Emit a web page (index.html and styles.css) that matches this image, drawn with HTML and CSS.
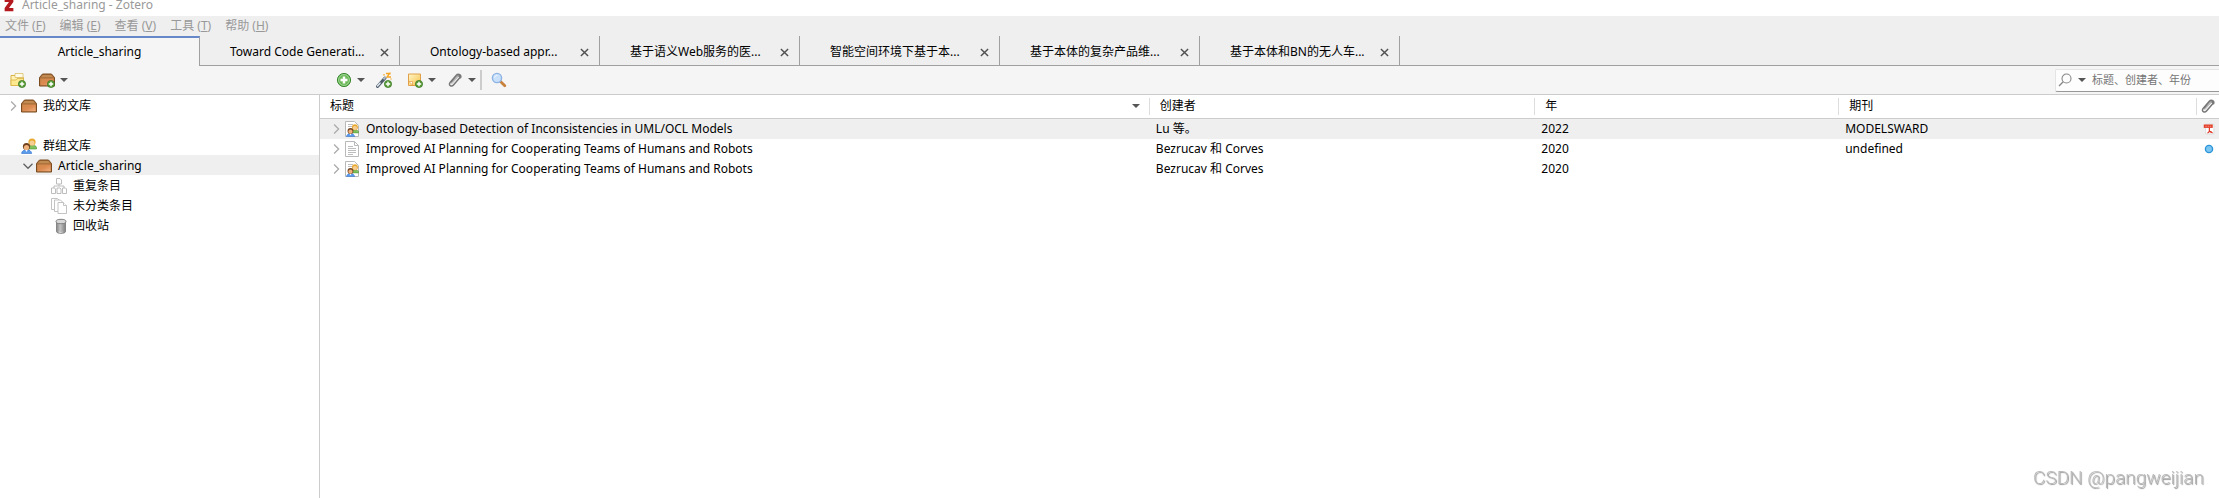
FILE: index.html
```html
<!DOCTYPE html>
<html lang="zh">

<head>
    <meta charset="UTF-8">
    <meta name="viewport" content="width=device-width, initial-scale=1.0">
    <title>Article_sharing - Zotero</title>
    <link rel="stylesheet" href="styles.css">
</head>

<body>

    <!-- 图标 -->
    <svg class="sprite" aria-hidden="true">
        <defs>
            <linearGradient id="boxFront" x1="0" y1="0" x2="1" y2="1">
                <stop offset="0" stop-color="#d08a4c" />
                <stop offset="0.5" stop-color="#dc8a50" />
                <stop offset="1" stop-color="#f0b080" />
            </linearGradient>
            <linearGradient id="noteFill" x1="0" y1="0" x2="1" y2="1">
                <stop offset="0" stop-color="#fff6c8" />
                <stop offset="1" stop-color="#f7c24a" />
            </linearGradient>
            <linearGradient id="binFill" x1="0" y1="0" x2="1" y2="0">
                <stop offset="0" stop-color="#777" />
                <stop offset="0.4" stop-color="#eee" />
                <stop offset="1" stop-color="#777" />
            </linearGradient>
            <radialGradient id="greenFill">
                <stop offset="0" stop-color="#8fd07a" />
                <stop offset="1" stop-color="#55a945" />
            </radialGradient>
        </defs>
        <symbol id="plus-badge" viewBox="0 0 8 8">
            <circle cx="4" cy="4" r="3.6" fill="#5a9e3a" stroke="#35751f" stroke-width="0.7" />
            <path d="M4 1.8v4.4M1.8 4h4.4" stroke="#fff" stroke-width="1.4" />
        </symbol>
        <symbol id="box" viewBox="0 0 16 16">
            <path d="M3.500 2h9l3 3.500v8.500H.5V5.500z" fill="#a86c38" stroke="#7b4c20" stroke-linejoin="round" />
            <path d="M3.800 3h8.400l1.800 2.300H2z" fill="#c08a50" />
            <path d="M1.300 6.500h13.400v6.700H1.300z" fill="url(#boxFront)" />
        </symbol>
        <symbol id="new-folder" viewBox="0 0 16 16">
            <path d="M1 3.500h5l1.500 2h6v8H1z" fill="#fff3b8" stroke="#d9b345" />
            <path d="M5 1.500h8v4H5z" fill="#fffbe6" stroke="#dcc069" stroke-width="0.8" />
            <path d="M1 8h5l1-1.500h6.500v7H1z" fill="#fce88f" stroke="#d9b345" stroke-width="0.8" />
            <use href="#plus-badge" x="8" y="8" width="8" height="8" />
        </symbol>
        <symbol id="new-library" viewBox="0 0 16 16">
            <use href="#box" width="16" height="16" />
            <use href="#plus-badge" x="8" y="8" width="8" height="8" />
        </symbol>
        <symbol id="add" viewBox="0 0 16 16">
            <circle cx="8" cy="8" r="6.600" fill="url(#greenFill)" stroke="#3f8c35" />
            <circle cx="8" cy="8" r="5.400" fill="none" stroke="#b9e3ad" stroke-width="0.8" />
            <path d="M8 4.500v7M4.500 8h7" stroke="#fff" stroke-width="2.400" />
        </symbol>
        <symbol id="wand" viewBox="0 0 16 16">
            <path d="M1.500 14.500L9 6" stroke="#4d5a68" stroke-width="3" stroke-linecap="round" />
            <path d="M1.500 14L4 11.200" stroke="#dbe4ee" stroke-width="1.600" stroke-linecap="round" />
            <path d="M7.500 7.300L9.500 5" stroke="#a9b6c4" stroke-width="2" />
            <path d="M10 1.500h3.500L11 5h4M14 .5v2M8 2v1.500M15 6.500v1" fill="none" stroke="#f5a623" stroke-width="1.300" />
            <use href="#plus-badge" x="8" y="8" width="8" height="8" />
        </symbol>
        <symbol id="new-note" viewBox="0 0 16 16">
            <path d="M1.500 2h12v11.500h-12z" fill="url(#noteFill)" stroke="#e0a04a" />
            <path d="M2 9.500l3.500 0v3.500z" fill="#fff" stroke="#e0912e" stroke-width="0.6" />
            <use href="#plus-badge" x="8" y="8" width="8" height="8" />
        </symbol>
        <symbol id="clip" viewBox="0 0 16 16">
            <path d="M5 10.500l5.500-6c1.500-1.500 3.300 0 2 1.600L6.500 13c-2 2.200-5.500.3-3.400-2.500l6-7c2.200-2.500 6-.5 4.400 2.300" fill="none" stroke="#777" stroke-width="1.500" stroke-linecap="round" />
            <path d="M4.300 11.800l6.500-7.300" stroke="#c8c8c8" stroke-width="1.200" />
        </symbol>
        <symbol id="find" viewBox="0 0 16 16">
            <path d="M9.500 9.500l4.300 4.300" stroke="#c8813c" stroke-width="2.800" stroke-linecap="round" />
            <circle cx="6" cy="6" r="4.600" fill="#c9e0fa" stroke="#8db2e3" stroke-width="1.400" />
            <path d="M3.600 5.500c.4-1.400 1.400-2 2.600-2" fill="none" stroke="#fff" />
        </symbol>
        <symbol id="lens" viewBox="0 0 16 16">
            <circle cx="9.500" cy="6.500" r="4.500" fill="none" stroke="#888" stroke-width="1.100" />
            <path d="M6.200 9.800L2 14" stroke="#888" stroke-width="1.300" />
        </symbol>
        <symbol id="group" viewBox="0 0 16 16">
            <path d="M6 9.500c0-3 9.500-3 9.500 0v1.500H6z" fill="#7fc25c" stroke="#4d9136" stroke-width="0.6" />
            <circle cx="11" cy="4" r="3.600" fill="#e9a92f" />
            <circle cx="11" cy="5" r="2.500" fill="#f7cf95" />
            <path d="M.6 15.500c0-5 10-5 10 0z" fill="#5b9bee" stroke="#2f6fc7" stroke-width="0.6" />
            <path d="M4.300 12h2.400l-1.200 2z" fill="#fff" />
            <circle cx="5.500" cy="8.500" r="3.600" fill="#70401d" />
            <circle cx="5.500" cy="9.500" r="2.600" fill="#f0b27c" />
        </symbol>
        <symbol id="duplicates" viewBox="0 0 16 16">
            <g fill="#fff" stroke="#b5b5b5" stroke-width="0.9">
                <path d="M8 6v2M3 10V8h10v2" fill="none" />
                <path d="M5.500.5h3.500l1.500 1.500v4h-5zM.5 10h3l1 1v4.500h-4zM6 10h3l1 1v4.500H6zM11.500 10h3l1 1v4.500h-4z" />
            </g>
        </symbol>
        <symbol id="unfiled" viewBox="0 0 16 16">
            <g fill="#fff" stroke="#bcbcbc" stroke-width="0.9">
                <path d="M.5.5h6l2 2v9h-8z" />
                <path d="M3.500 2h6l2 2v9.500h-8z" />
                <path d="M7 4.500h5.500l3 3v8H7z" />
                <path d="M12.500 4.500v3h3" />
            </g>
        </symbol>
        <symbol id="bin" viewBox="0 0 16 16">
            <path d="M5.500 3.500h9v10c0 2.500-9 2.500-9 0z" fill="url(#binFill)" stroke="#777" stroke-width="0.8" />
            <path d="M8 6v7.500M10 6v8M12 6v7.500" stroke="#888" stroke-width="0.8" />
            <ellipse cx="10" cy="3.500" rx="5" ry="2.200" fill="#d8d8d8" stroke="#777" stroke-width="0.9" />
        </symbol>
        <symbol id="page" viewBox="0 0 16 16">
            <path d="M1.500.5h9l4 4v11h-13z" fill="#fff" stroke="#b9b9b9" />
            <path d="M10.500.5v4h4" fill="none" stroke="#b9b9b9" />
            <path d="M4 5.500h5M4 7.500h8M4 9.500h8M4 11.500h8M4 13.500h5" stroke="#b5b5b5" stroke-width="0.9" />
        </symbol>
        <symbol id="group-page" viewBox="0 0 16 16">
            <path d="M1.500.5h9l4 4v11h-13z" fill="#fff" stroke="#b9b9b9" />
            <path d="M4 3.500h5M4 5.500h5" stroke="#b5b5b5" stroke-width="0.9" />
            <use href="#group" x="2" y="3" width="13" height="13" />
        </symbol>
        <symbol id="pdf" viewBox="0 0 16 16">
            <path d="M3.500 1.500h11v13h-11z" fill="#fff" stroke="#d5d5d5" />
            <path d="M1 2h12v4.500H1z" fill="#e33b25" />
            <path d="M3 4.300h8" stroke="#f7b0a5" stroke-dasharray="2 1" />
            <path d="M8.500 6v4.500c1 1.500 2 2.500 4.500 2.500M9 10c-.5 1.500-1.500 2.500-3 3.500M7.500 11.500h4" fill="none" stroke="#e03a28" stroke-width="1.600" />
        </symbol>
        <symbol id="dot" viewBox="0 0 16 16">
            <circle cx="8" cy="8" r="4.800" fill="#7cc6f2" stroke="#2b94d8" stroke-width="1.800" />
        </symbol>
        <symbol id="twisty" viewBox="0 0 16 16">
            <path d="M5.500 2l6 6-6 6" fill="none" stroke="#aaa" stroke-width="1.700" />
        </symbol>
        <symbol id="twisty-open" viewBox="0 0 16 16">
            <path d="M2 5l6 6 6-6" fill="none" stroke="#606060" stroke-width="1.700" />
        </symbol>
        <symbol id="close" viewBox="0 0 10 10">
            <path d="M1 1l8 8M9 1L1 9" stroke="#505050" stroke-width="1.600" />
        </symbol>
        <symbol id="zotero" viewBox="0 0 12 16">
            <path d="M1 1h10v3.500L6 11.500h5V15H1v-3.500L6 4.500H1z" fill="#b3191e" />
        </symbol>
    </svg>

    <header class="title-bar">
        <svg class="logo"><use href="#zotero" /></svg>
        <span>Article_sharing - Zotero</span>
    </header>

    <nav class="menu-bar">
        <button>文件 (<u>F</u>)</button>
        <button>编辑 (<u>E</u>)</button>
        <button>查看 (<u>V</u>)</button>
        <button>工具 (<u>T</u>)</button>
        <button>帮助 (<u>H</u>)</button>
    </nav>

    <div class="tab-bar">
        <div class="tab selected"><button class="tab-name">Article_sharing</button></div>
        <div class="tab">
            <button class="tab-name">Toward Code Generati...</button>
            <button class="tab-close" aria-label="关闭"><svg><use href="#close" /></svg></button>
        </div>
        <div class="tab">
            <button class="tab-name">Ontology-based appr...</button>
            <button class="tab-close" aria-label="关闭"><svg><use href="#close" /></svg></button>
        </div>
        <div class="tab">
            <button class="tab-name">基于语义Web服务的医...</button>
            <button class="tab-close" aria-label="关闭"><svg><use href="#close" /></svg></button>
        </div>
        <div class="tab">
            <button class="tab-name">智能空间环境下基于本...</button>
            <button class="tab-close" aria-label="关闭"><svg><use href="#close" /></svg></button>
        </div>
        <div class="tab">
            <button class="tab-name">基于本体的复杂产品维...</button>
            <button class="tab-close" aria-label="关闭"><svg><use href="#close" /></svg></button>
        </div>
        <div class="tab">
            <button class="tab-name">基于本体和BN的无人车...</button>
            <button class="tab-close" aria-label="关闭"><svg><use href="#close" /></svg></button>
        </div>
    </div>

    <div class="toolbar">
        <div class="collection-tools">
            <button aria-label="新建分类"><svg class="icon"><use href="#new-folder" /></svg></button>
            <button class="has-menu" aria-label="新建文库"><svg class="icon"><use href="#new-library" /></svg></button>
        </div>
        <div class="item-tools">
            <button class="has-menu" aria-label="新建条目"><svg class="icon"><use href="#add" /></svg></button>
            <button class="wand" aria-label="通过标识符添加条目"><svg class="icon"><use href="#wand" /></svg></button>
            <button class="has-menu" aria-label="新建笔记"><svg class="icon"><use href="#new-note" /></svg></button>
            <button class="has-menu" aria-label="添加附件"><svg class="icon"><use href="#clip" /></svg></button>
            <span class="separator"></span>
            <button aria-label="高级搜索"><svg class="icon"><use href="#find" /></svg></button>
        </div>
        <div class="search-box">
            <button class="has-menu" aria-label="搜索范围"><svg class="icon"><use href="#lens" /></svg></button>
            <input type="text" placeholder="标题、创建者、年份" aria-label="搜索">
        </div>
    </div>

    <main class="panes">
        <!-- 分类列表 -->
        <ul class="collections">
            <li><svg class="twisty"><use href="#twisty" /></svg><svg class="icon"><use href="#box" /></svg>我的文库</li>
            <li></li>
            <li><span class="twisty"></span><svg class="icon"><use href="#group" /></svg>群组文库</li>
            <li class="level-1 current"><svg class="twisty"><use href="#twisty-open" /></svg><svg class="icon"><use href="#box" /></svg>Article_sharing</li>
            <li class="level-2"><span class="twisty"></span><svg class="icon"><use href="#duplicates" /></svg>重复条目</li>
            <li class="level-2"><span class="twisty"></span><svg class="icon"><use href="#unfiled" /></svg>未分类条目</li>
            <li class="level-2"><span class="twisty"></span><svg class="icon"><use href="#bin" /></svg>回收站</li>
        </ul>

        <!-- 条目列表 -->
        <div class="items">
            <table>
                <colgroup>
                    <col class="col-title">
                    <col class="col-creator">
                    <col class="col-year">
                    <col>
                    <col class="col-attachment">
                </colgroup>
                <thead>
                    <tr>
                        <th><div class="head sorted">标题</div></th>
                        <th><div class="head">创建者</div></th>
                        <th><div class="head">年</div></th>
                        <th><div class="head">期刊</div></th>
                        <th><div class="head head-icon"><svg class="icon" role="img" aria-label="附件"><use href="#clip" /></svg></div></th>
                    </tr>
                </thead>
                <tbody>
                    <tr class="current">
                        <td><div class="item-title"><svg class="twisty"><use href="#twisty" /></svg><svg class="icon"><use href="#group-page" /></svg>Ontology-based Detection of Inconsistencies in UML/OCL Models</div></td>
                        <td>Lu 等。</td>
                        <td>2022</td>
                        <td>MODELSWARD</td>
                        <td><svg class="small-icon"><use href="#pdf" /></svg></td>
                    </tr>
                    <tr>
                        <td><div class="item-title"><svg class="twisty"><use href="#twisty" /></svg><svg class="icon"><use href="#page" /></svg>Improved AI Planning for Cooperating Teams of Humans and Robots</div></td>
                        <td>Bezrucav 和 Corves</td>
                        <td>2020</td>
                        <td>undefined</td>
                        <td><svg class="small-icon"><use href="#dot" /></svg></td>
                    </tr>
                    <tr>
                        <td><div class="item-title"><svg class="twisty"><use href="#twisty" /></svg><svg class="icon"><use href="#group-page" /></svg>Improved AI Planning for Cooperating Teams of Humans and Robots</div></td>
                        <td>Bezrucav 和 Corves</td>
                        <td>2020</td>
                        <td></td>
                        <td></td>
                    </tr>
                </tbody>
            </table>
        </div>
    </main>

    <div class="watermark">CSDN @pangweijian</div>

</body>

</html>
```

FILE: styles.css
```css
* {
    box-sizing: border-box;
}

body {
    margin: 0;
    min-height: 100vh;
    display: flex;
    flex-direction: column;
    font-family: "Noto Sans", "Noto Sans CJK SC", sans-serif;
    font-size: 12px;
    line-height: 20px;
    color: #000;
    background-color: #fff;
}

button {
    padding: 0;
    border: none;
    background: none;
    font: inherit;
    color: inherit;
    white-space: nowrap;
}

svg {
    display: block;
    flex: none;
}

.sprite {
    position: absolute;
    width: 0;
    height: 0;
}

.icon {
    width: 16px;
    height: 16px;
}

.twisty {
    flex: none;
    width: 12px;
    height: 12px;
}

/* 标题栏和菜单 */
.title-bar {
    display: flex;
    align-items: center;
    gap: 7px;
    height: 16px;
    padding: 0 3px 6px;
    color: #999;
}

.logo {
    width: 12px;
    height: 14px;
}

.menu-bar {
    display: flex;
    gap: 14px;
    height: 20px;
    padding-left: 5px;
    background-color: #efefef;
    color: #999;
}

/* 标签页 */
.tab-bar {
    display: flex;
    height: 30px;
    background: linear-gradient(#a0a0a0, #a0a0a0) bottom / 100% 1px no-repeat #efefef;
}

.tab {
    display: flex;
    align-items: center;
    justify-content: space-between;
    width: 200px;
    padding: 2px 10px 0 30px;
    border-right: 1px solid #a0a0a0;
}

.tab.selected {
    justify-content: center;
    padding: 0;
    border-top: 2px solid #6788c8;
    background-color: #f5f5f5;
}

.tab-close svg {
    width: 9px;
    height: 9px;
}

/* 工具栏 */
.toolbar {
    display: flex;
    align-items: center;
    height: 29px;
    border-bottom: 1px solid #ccc;
    background-color: #f5f5f5;
}

.toolbar button,
.collection-tools,
.item-tools {
    display: flex;
    align-items: center;
}

.collection-tools {
    width: 320px;
    gap: 13px;
    padding-left: 10px;
}

.item-tools {
    flex: 1;
    gap: 11px;
    padding-left: 16px;
}

.toolbar .wand {
    padding-right: 4px;
}

.has-menu::after {
    content: "";
    margin-left: 5px;
    border: 4px solid transparent;
    border-top-color: #555;
    border-bottom: none;
}

.separator {
    width: 2px;
    height: 20px;
    margin: 0 -2px 0 -7px;
    background-color: #ccc;
}

.search-box {
    display: flex;
    align-items: center;
    width: 164px;
    height: 23px;
    padding-left: 1px;
    border: 1px solid #e4e4e4;
    border-right: none;
    border-bottom-color: #999;
    border-radius: 2px 0 0 2px;
    background-color: #fdfdfd;
}

.search-box input {
    flex: 1;
    min-width: 0;
    padding: 0 0 0 6px;
    border: none;
    outline: none;
    background: none;
    font: inherit;
    font-size: 11px;
}

.search-box input::placeholder {
    color: #757575;
}

/* 主区域 */
.panes {
    display: flex;
    flex: 1;
}

.collections {
    width: 320px;
    margin: 0;
    padding: 0;
    border-right: 1px solid #ccc;
    list-style: none;
}

.collections li {
    display: flex;
    align-items: center;
    height: 20px;
    padding: 1px 0 0 7px;
}

.collections .icon {
    margin: 0 6px 0 2px;
}

.collections .level-1 {
    padding-left: 22px;
}

.collections .level-2 {
    padding-left: 37px;
}

.current {
    background-color: #efefef;
}

.items {
    flex: 1;
}

table {
    width: 100%;
    table-layout: fixed;
    border-collapse: collapse;
}

.col-title {
    width: 43.7%;
}

.col-creator {
    width: 20.3%;
}

.col-year {
    width: 16%;
}

.col-attachment {
    width: 22px;
}

th {
    height: 23px;
    padding: 0;
    border-bottom: 1px solid #ccc;
    font-weight: normal;
    text-align: left;
}

.head {
    display: flex;
    align-items: center;
    justify-content: space-between;
    height: 17px;
    padding: 0 9px 0 10px;
    border-right: 1px solid #ddd;
}

.head-icon {
    padding: 0 0 0 3px;
    border-right: none;
}

.sorted::after {
    content: "";
    border: 4px solid transparent;
    border-top-color: #555;
    border-bottom: none;
}

td {
    height: 20px;
    padding: 0 0 0 6px;
    white-space: nowrap;
}

.item-title {
    display: flex;
    align-items: center;
    padding-left: 4px;
}

.item-title .icon {
    margin: 0 6px 0 2px;
}

.small-icon {
    width: 12px;
    height: 12px;
}

.watermark {
    position: fixed;
    right: 15px;
    bottom: 10px;
    font-family: Roboto, sans-serif;
    font-size: 19px;
    font-weight: 300;
    color: #bbb;
    text-shadow: 1px 1px 1px #999;
}
```
